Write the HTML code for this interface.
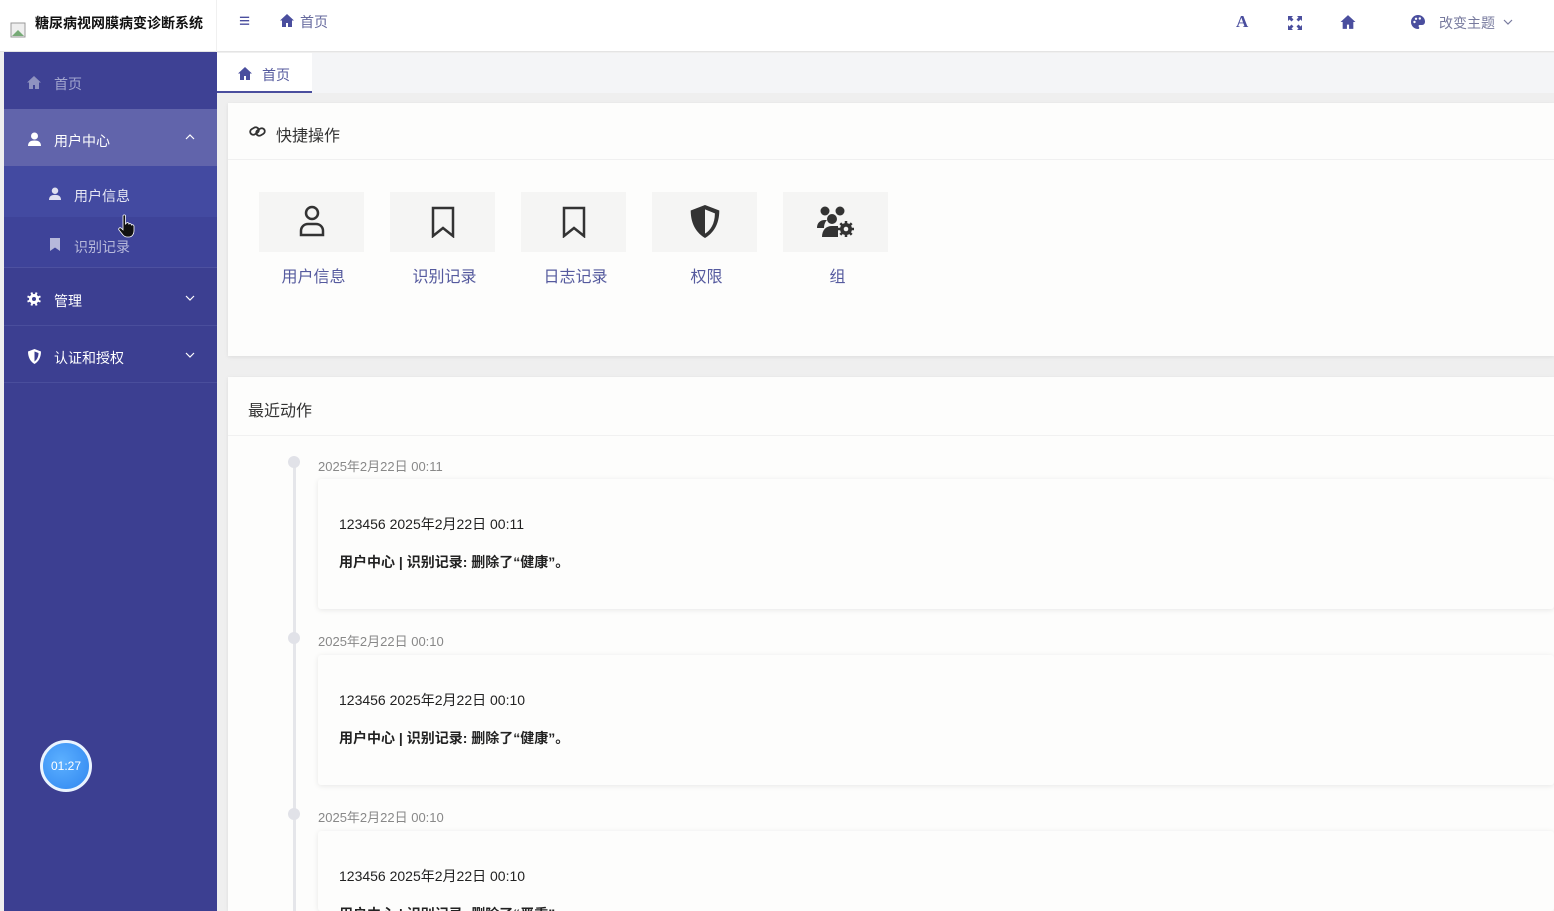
<!DOCTYPE html>
<html style="width:1554px;height:911px;overflow:hidden"><head><meta charset="utf-8"><style>
*{box-sizing:border-box;margin:0;padding:0}
body{width:1554px;height:911px;overflow:hidden;background:#efefef;font-family:"Liberation Sans","Noto Sans CJK SC",sans-serif;position:relative}
.top{position:absolute;left:0;top:0;width:1554px;height:52px;background:#fff;border-bottom:1px solid #e4e4e4}
.logo{position:absolute;left:0;top:0;width:217px;height:52px;border-right:1px solid #f0f0f0}
.logo b{position:absolute;left:35px;top:13px;font-size:14px;color:#111}
.side{position:absolute;left:4px;top:52px;width:213px;height:859px;background:#3c3f91}
.mi{position:absolute;left:0;width:213px;color:#fff;font-size:14px}
.mi span{position:absolute;left:50px}
.ic{position:absolute}
.tabs{position:absolute;left:217px;top:53px;right:0;height:40px;background:#f4f5f7}
.tab{position:absolute;left:0;top:0;width:95px;height:40px;background:#fff;border-bottom:2px solid #4a4e9e}
.card{position:absolute;left:228px;right:0;background:#fdfdfc;box-shadow:0 1px 4px rgba(0,0,0,.08)}
.q{position:absolute;top:192px;width:105px;height:60px;background:#f5f5f4}
.ql{position:absolute;top:263px;width:105px;text-align:center;font-size:16px;color:#555a9e}
.tl{position:absolute;left:293px;width:3px;background:#e5e6ea}
.dot{position:absolute;left:288px;width:12px;height:12px;border-radius:50%;background:#e1e2e8}
.ts{position:absolute;left:318px;font-size:13px;color:#888}
.ent{position:absolute;left:318px;right:0;height:130px;background:#fdfdfc;box-shadow:0 1px 6px rgba(0,0,0,.09);border-radius:3px}
.ent p{position:absolute;left:21px;font-size:14px;color:#222}
.ent .a{top:35px}.ent .b{top:73px;font-weight:bold}
</style></head><body>
<div class="top">
<div class="logo"><svg class="ic" style="left:10px;top:22px" width="16" height="16"><rect x="1" y="1" width="14" height="14" fill="#eee" stroke="#999"/><path d="M2 14 L8 8 L14 14Z" fill="#7a7"/></svg><b>糖尿病视网膜病变诊断系统</b></div>
<div style="position:absolute;left:239px;top:11px;font-size:19px;color:#4a4e9e">≡</div>
<svg class="ic" style="left:279px;top:13px" width="16" height="15" viewBox="0 0 16 15"><path d="M8 1L1 7.5h2V14h4v-4h2v4h4V7.5h2z" fill="#4a4e9e"/></svg>
<div style="position:absolute;left:300px;top:12px;font-size:14px;color:#666a9e">首页</div>
<div style="position:absolute;left:1236px;top:12px;font-size:17px;font-weight:bold;color:#4a4e9e;font-family:'Liberation Serif',serif">A</div>
<svg class="ic" style="left:1288px;top:16px" width="14" height="14" viewBox="0 0 14 14"><path d="M0 0h5L3.5 1.5 5.5 3.5 3.5 5.5 1.5 3.5 0 5zM14 0v5l-1.5-1.5-2 2-2-2 2-2L9 0zM0 14V9l1.5 1.5 2-2 2 2-2 2L5 14zM14 14H9l1.5-1.5-2-2 2-2 2 2L14 9z" fill="#4a4e9e"/></svg>
<svg class="ic" style="left:1339px;top:14px" width="18" height="16" viewBox="0 0 16 15"><path d="M8 1L1 7.5h2V14h4v-4h2v4h4V7.5h2z" fill="#4a4e9e"/></svg>
<svg class="ic" style="left:1410px;top:14px" width="16" height="16" viewBox="0 0 16 16"><path d="M8 1a7 7 0 1 0 0 14c1.5 0 1.5-1.5 .8-2.3-.6-.8 0-1.7 1-1.7H12c2 0 3-1.5 3-3.5C15 4 12 1 8 1z" fill="#4a4e9e"/><circle cx="4.5" cy="8" r="1.2" fill="#fff"/><circle cx="6" cy="4.8" r="1.2" fill="#fff"/><circle cx="9.8" cy="4.5" r="1.2" fill="#fff"/></svg>
<div style="position:absolute;left:1439px;top:13px;font-size:14px;color:#777a9e">改变主题</div>
<svg class="ic" style="left:1503px;top:19px" width="10" height="6"><path d="M1 1l4 4 4-4" fill="none" stroke="#777a9e" stroke-width="1.2"/></svg>
</div>
<div class="side">
<div class="mi" style="top:0;height:57px;background:#3e4194"><svg class="ic" style="left:22px;top:23px" width="16" height="15" viewBox="0 0 16 15"><path d="M8 1L1 7.5h2V14h4v-4h2v4h4V7.5h2z" fill="#8f92c0"/></svg><span style="top:22px;color:#a3a6cf">首页</span></div>
<div class="mi" style="top:57px;height:57px;background:#6164ab"><svg class="ic" style="left:24px;top:23px" width="13" height="14" viewBox="0 0 13 14"><circle cx="6.5" cy="4" r="3.5" fill="#fff"/><path d="M0 14c0-4 2.5-5.5 6.5-5.5S13 10 13 14z" fill="#fff"/></svg><span style="top:22px">用户中心</span><svg class="ic" style="left:181px;top:25px" width="10" height="6"><path d="M1 5l4-4 4 4" fill="none" stroke="#fff" stroke-width="1.2"/></svg></div>
<div class="mi" style="top:114px;height:51px;background:#434aa1"><svg class="ic" style="left:45px;top:21px" width="12" height="13" viewBox="0 0 13 14"><circle cx="6.5" cy="4" r="3.5" fill="#dfe0f0"/><path d="M0 14c0-4 2.5-5.5 6.5-5.5S13 10 13 14z" fill="#dfe0f0"/></svg><span style="left:70px;top:20px;color:#e6e7f4">用户信息</span></div>
<div class="mi" style="top:165px;height:51px;background:#3e4399;border-bottom:1px solid #4d51a0"><svg class="ic" style="left:46px;top:21px" width="10" height="13"><path d="M0 0h10v13L5 9.5 0 13z" fill="#b7b9db"/></svg><span style="left:70px;top:20px;color:#b7b9db">识别记录</span></div>
<svg class="ic" style="left:114px;top:162px" width="18" height="24" viewBox="0 0 18 24"><path d="M5 2c0-1.5 2.5-1.5 2.5 0v8l1-1c1-1 2.5 0 2.5 1 1-1 2.5 0 2.5 1 1-.8 2.5 0 2.5 1.2V17c0 3-2 6-5 6H9c-2 0-3-1-4-2l-4-5c-1-1.3.7-3 2-2l2 1.8z" fill="#111" stroke="#fff" stroke-width=".8"/></svg>
<div class="mi" style="top:217px;height:57px;border-bottom:1px solid #4a4e9c"><svg class="ic" style="left:23px;top:23px" width="14" height="14" viewBox="0 0 14 14"><circle cx="7" cy="7" r="5" fill="#fff"/><path d="M6 0h2v14H6zM0 6h14v2H0z" fill="#fff" transform="rotate(22 7 7)"/><path d="M6 0h2v14H6zM0 6h14v2H0z" fill="#fff" transform="rotate(-22 7 7)"/><circle cx="7" cy="7" r="2" fill="#3c3f91"/></svg><span style="top:22px">管理</span><svg class="ic" style="left:181px;top:26px" width="10" height="6"><path d="M1 1l4 4 4-4" fill="none" stroke="#fff" stroke-width="1.2"/></svg></div>
<div class="mi" style="top:274px;height:57px;border-bottom:1px solid #4a4e9c"><svg class="ic" style="left:24px;top:23px" width="13" height="15" viewBox="0 0 13 15"><path d="M6.5 0L13 2.5C13 9 10 13 6.5 15 3 13 0 9 0 2.5z" fill="#fff"/><path d="M6.5 2.5L10.5 4C10.5 8.5 8.5 11 6.5 12.5z" fill="#3c3f91"/></svg><span style="top:22px">认证和授权</span><svg class="ic" style="left:181px;top:26px" width="10" height="6"><path d="M1 1l4 4 4-4" fill="none" stroke="#fff" stroke-width="1.2"/></svg></div>
<div style="position:absolute;left:36px;top:688px;width:52px;height:52px;border-radius:50%;background:radial-gradient(circle at 40% 40%,#5cb0ff,#2f86f0);border:3px solid #eaf4ff;color:#fff;font-size:12px;text-align:center;line-height:46px">01:27</div>
</div>
<div class="tabs"><div class="tab"><svg class="ic" style="left:20px;top:13px" width="16" height="15" viewBox="0 0 16 15"><path d="M8 1L1 7.5h2V14h4v-4h2v4h4V7.5h2z" fill="#4a4e9e"/></svg><span style="position:absolute;left:45px;top:12px;font-size:14px;color:#555a9e">首页</span></div></div>
<div class="card" style="top:103px;height:253px">
<div style="position:absolute;left:0;right:0;top:56px;border-top:1px solid #f0f0f0"></div>
<svg class="ic" style="left:21px;top:22px" width="17" height="13" viewBox="0 0 17 13"><rect x="1" y="3" width="9" height="6" rx="3" transform="rotate(-30 5.5 6)" fill="none" stroke="#333" stroke-width="1.8"/><rect x="7" y="4" width="9" height="6" rx="3" transform="rotate(-30 11.5 7)" fill="none" stroke="#333" stroke-width="1.8"/></svg>
<div style="position:absolute;left:48px;top:19px;font-size:16px;color:#333">快捷操作</div>
</div>
<div class="q" style="left:259px"><svg class="ic" style="left:40px;top:13px" width="26" height="32" viewBox="0 0 26 32"><circle cx="13" cy="8" r="6" fill="none" stroke="#333" stroke-width="2.5"/><path d="M2 30v-4c0-4 3-7 7-7h8c4 0 7 3 7 7v4z" fill="none" stroke="#333" stroke-width="2.5"/></svg></div>
<div class="q" style="left:390px"><svg class="ic" style="left:41px;top:14px" width="24" height="32"><path d="M2 2h20v28l-10-8-10 8z" fill="none" stroke="#333" stroke-width="2.5"/></svg></div>
<div class="q" style="left:521px"><svg class="ic" style="left:41px;top:14px" width="24" height="32"><path d="M2 2h20v28l-10-8-10 8z" fill="none" stroke="#333" stroke-width="2.5"/></svg></div>
<div class="q" style="left:652px"><svg class="ic" style="left:38px;top:13px" width="30" height="33" viewBox="0 0 13 15"><path d="M6.5 0L13 2.5C13 9 10 13 6.5 15 3 13 0 9 0 2.5z" fill="#333"/><path d="M6.5 2L11 3.8C11 8.5 9 11.5 6.5 13z" fill="#f5f5f4"/></svg></div>
<div class="q" style="left:783px"><svg class="ic" style="left:33px;top:14px" width="40" height="32" viewBox="0 0 40 32"><circle cx="9" cy="5" r="4.5" fill="#333"/><circle cx="24" cy="5" r="4.5" fill="#333"/><circle cx="16" cy="13" r="5" fill="#333"/><path d="M1 22c0-5 3-8 8-8h2c-2 2-3 5-3 8z" fill="#333"/><path d="M6 31c0-7 4-11 10-11h6v11z" fill="#333"/><circle cx="30" cy="23" r="6" fill="#333"/><path d="M30 15v16M22 23h16M24.3 17.3l11.4 11.4M35.7 17.3L24.3 28.7" stroke="#333" stroke-width="2.5"/><circle cx="30" cy="23" r="2.3" fill="#f5f5f4"/></svg></div>
<div class="ql" style="left:261px">用户信息</div><div class="ql" style="left:392px">识别记录</div><div class="ql" style="left:523px">日志记录</div><div class="ql" style="left:654px">权限</div><div class="ql" style="left:785px">组</div>
<div class="card" style="top:377px;height:534px">
<div style="position:absolute;left:0;right:0;top:58px;border-top:1px solid #f1f1f1"></div>
<div style="position:absolute;left:20px;top:20px;font-size:16px;color:#333">最近动作</div>
</div>
<div class="tl" style="top:463px;height:448px"></div>
<div class="dot" style="top:456px"></div><div class="dot" style="top:632px"></div><div class="dot" style="top:808px"></div>
<div class="ts" style="top:456px">2025年2月22日 00:11</div>
<div class="ts" style="top:631px">2025年2月22日 00:10</div>
<div class="ts" style="top:807px">2025年2月22日 00:10</div>
<div class="ent" style="top:479px"><p class="a">123456 2025年2月22日 00:11</p><p class="b">用户中心 | 识别记录: 删除了“健康”。</p></div>
<div class="ent" style="top:655px"><p class="a">123456 2025年2月22日 00:10</p><p class="b">用户中心 | 识别记录: 删除了“健康”。</p></div>
<div class="ent" style="top:831px;height:80px"><p class="a">123456 2025年2月22日 00:10</p><p class="b">用户中心 | 识别记录: 删除了“严重”。</p></div>
</body></html>
